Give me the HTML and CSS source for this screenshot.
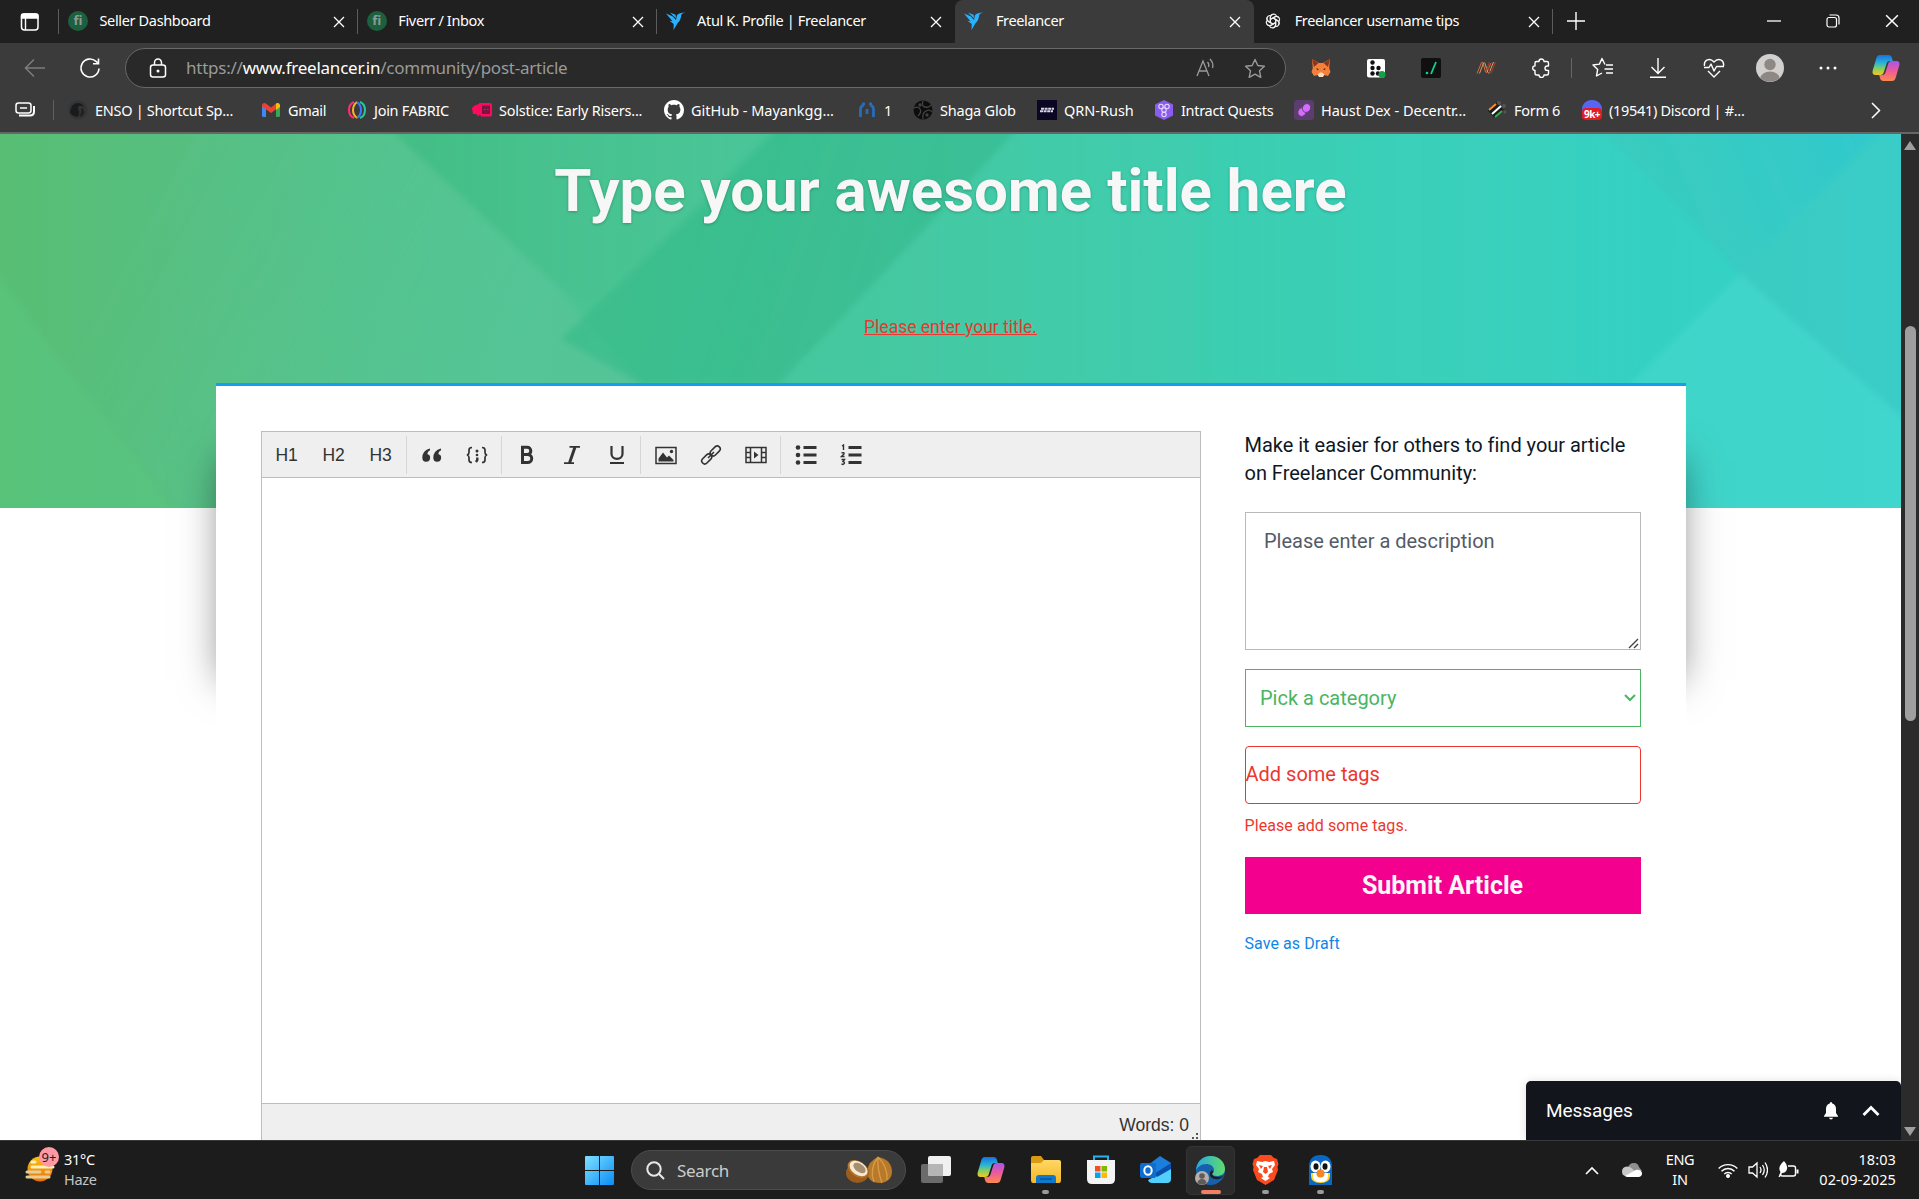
FILE: index.html
```html
<!DOCTYPE html>
<html lang="en">
<head>
<meta charset="utf-8">
<title>Freelancer</title>
<link rel="stylesheet" href="styles.css">
</head>
<body>
<svg class="defs" aria-hidden="true">
  <defs>
    <linearGradient id="cpA" x1="0" y1="0" x2="0" y2="1"><stop offset="0" stop-color="#1b6fe0"/><stop offset=".4" stop-color="#28b5d8"/><stop offset=".7" stop-color="#8ccf5a"/><stop offset="1" stop-color="#f7c520"/></linearGradient>
    <linearGradient id="cpB" x1="0" y1="0" x2="0" y2="1"><stop offset="0" stop-color="#a457e8"/><stop offset=".5" stop-color="#ee5a9a"/><stop offset="1" stop-color="#fb8a4c"/></linearGradient>
    <linearGradient id="win" x1="0" y1="0" x2="1" y2="1"><stop offset="0" stop-color="#7fe0ff"/><stop offset="1" stop-color="#0a8df5"/></linearGradient>
    <linearGradient id="edge1" x1="0" y1="0" x2="1" y2="0"><stop offset="0" stop-color="#2aa8e0"/><stop offset="1" stop-color="#5fdc6a"/></linearGradient>
    <linearGradient id="sun" x1="0" y1="0" x2="0" y2="1"><stop offset="0" stop-color="#f6c416"/><stop offset="1" stop-color="#ee6c08"/></linearGradient>
    <linearGradient id="fold" x1="0" y1="0" x2="0" y2="1"><stop offset="0" stop-color="#ffd766"/><stop offset="1" stop-color="#f5b824"/></linearGradient>
    <symbol id="close" viewBox="0 0 12 12"><path d="M1 1l10 10M11 1L1 11" stroke="currentColor" stroke-width="1.3" fill="none"/></symbol>
    <symbol id="bird" viewBox="0 0 20 20"><path fill="#29b2fe" d="M11 4.200q2-2.700 8.500-2.700-3.800.8-4.300 2.800-.2 4.500-3.700 8L7.500 19l.2-6-4.200-3.200 3 .4L0 2.500l6.500 2.700L10 9z"/><path fill="#29b2fe" d="M4 1.500l5.500 2.200.8 3.800L6.500 4z"/></symbol>
    <symbol id="copilot" viewBox="0 0 28 28"><path fill="url(#cpA)" d="M8 1h8.500c2 0 3 1.200 3.500 3l.8 3h-3.300c-1.600 0-2.500 1-3 2.700l-2.800 8.800c-.6 1.800-1.700 2.500-3.500 2.500H3.500C1 21 0 19 .7 16.500L4.400 4C5 2 6 1 8 1z"/><path fill="url(#cpB)" d="M20 27h-8.500c-2 0-3-1.200-3.500-3l-.8-3h3.300c1.600 0 2.500-1 3-2.700l2.800-8.800C16.900 7.700 18 7 19.800 7h4.700C27 7 28 9 27.300 11.500L23.600 24C23 26 22 27 20 27z"/></symbol>
  </defs>
</svg>

<header class="tabstrip">
  <div class="tab-actions"><svg width="20" height="20" viewBox="0 0 20 20"><rect x="1.500" y="2" width="16.500" height="16" rx="3" fill="none" stroke="#fff" stroke-width="1.500"/><path d="M1.500 3.500q0-1.500 2-1.500h12.500q2 0 2 1.500V6h-16.500zM5.500 6v12" fill="#fff" stroke="#fff" stroke-width="1.400"/></svg></div>
  <div class="tab"><span class="fiverr">fi</span><span class="tab-title">Seller Dashboard</span><svg class="x"><use href="#close"/></svg></div>
  <div class="tab"><span class="fiverr">fi</span><span class="tab-title">Fiverr / Inbox</span><svg class="x"><use href="#close"/></svg></div>
  <div class="tab"><svg class="fav"><use href="#bird"/></svg><span class="tab-title">Atul K. Profile | Freelancer</span><svg class="x"><use href="#close"/></svg></div>
  <div class="tab active"><svg class="fav"><use href="#bird"/></svg><span class="tab-title">Freelancer</span><svg class="x"><use href="#close"/></svg></div>
  <div class="tab plain"><svg class="fav knot" viewBox="0 0 24 24" fill="none" stroke="#f2f2f2" stroke-width="1.500"><g id="petal"><path d="M8.500 14V7.200a4.300 4.300 0 0 1 8-2.200M8.500 9.800l5.900-3.400a4.300 4.300 0 0 1 5.700 1.600"/></g><use href="#petal" transform="rotate(60 12 12)"/><use href="#petal" transform="rotate(120 12 12)"/><use href="#petal" transform="rotate(180 12 12)"/><use href="#petal" transform="rotate(240 12 12)"/><use href="#petal" transform="rotate(300 12 12)"/></svg><span class="tab-title">Freelancer username tips</span><svg class="x"><use href="#close"/></svg></div>
  <div class="newtab"><svg width="18" height="18"><path d="M9 0v18M0 9h18" stroke="#fff" stroke-width="1.400"/></svg></div>
  <div class="winctl">
    <svg width="14" height="14"><path d="M0 7h14" stroke="#fff" stroke-width="1.300"/></svg>
    <svg width="14" height="14" fill="none" stroke="#fff" stroke-width="1.200"><rect x="1" y="3.500" width="9.500" height="9.500" rx="2"/><path d="M3.500 1h6.500a3 3 0 0 1 3 3v6.500"/></svg>
    <svg width="14" height="14"><use href="#close"/></svg>
  </div>
</header>

<nav class="toolbar">
  <div class="navbtn dim"><svg width="22" height="20" viewBox="0 0 22 20" fill="none" stroke="#7d7d7d" stroke-width="1.500"><path d="M21 10H2M10 1.500L1.500 10l8.500 8.500"/></svg></div>
  <div class="navbtn"><svg width="22" height="22" viewBox="0 0 22 22" fill="none" stroke="#fff" stroke-width="1.600"><path d="M20 11.500a9 9 0 1 1-3-7.200l2 2M19.500 1.500v5.300h-5.500"/></svg></div>
  <div class="omnibox">
    <svg width="18" height="20" viewBox="0 0 18 20"><rect x="1.500" y="7" width="15" height="12" rx="2.500" fill="none" stroke="#fff" stroke-width="1.500"/><path d="M5.500 7V4.500a3.500 3.500 0 0 1 7 0V7" fill="none" stroke="#fff" stroke-width="1.500"/><circle cx="9" cy="13" r="1.500" fill="#fff"/></svg>
    <span class="url">https://<b>www.freelancer.in</b>/community/post-article</span>
    <svg width="20" height="20" viewBox="0 0 20 20" fill="none" stroke="#9a9a9a" stroke-width="1.300"><path d="M1 18L7 3l6 15M3 13h8M11.500 4q2 2 1 5M14 1q4 4.500 2.500 9"/></svg>
    <svg class="star" width="22" height="21" viewBox="0 0 22 21" fill="none" stroke="#9a9a9a" stroke-width="1.400" stroke-linejoin="round"><path d="M11 1.500l2.800 6 6.600.8-4.900 4.500 1.300 6.500L11 16.100l-5.800 3.200 1.300-6.500L1.600 8.300l6.600-.8z"/></svg>
  </div>
  <div class="ext">
    <svg width="20" height="20" viewBox="0 0 20 20"><path fill="#f5803a" d="M1 1l7 4h4l7-4-.8 9 1.300 4-2.500 4-4-1H7l-4 1-2.500-4 1.300-4z"/><path fill="#8f3414" d="M1 1l6.500 4L3 9zM19 1l-6.500 4L17 9z"/><path fill="#ffd9c0" d="M6.500 16.500L9 14.500h2l2.500 2-1.500 2.500H8z"/><path fill="#3a1c10" d="M5.500 10l2.500 1.500-2 .5zM14.500 10L12 11.500l2 .5z"/></svg>
    <svg width="20" height="20" viewBox="0 0 20 20"><rect x="1" y="1" width="18" height="18.500" rx="2" fill="#fff"/><g fill="#111"><circle cx="6.500" cy="4.500" r="2.200"/><circle cx="6.500" cy="10" r="2.200"/><circle cx="12.500" cy="10" r="2.200"/><circle cx="6.500" cy="15.500" r="2.200"/><circle cx="12" cy="15.500" r="2.200"/></g><circle cx="16" cy="16.500" r="3.500" fill="#13a24a"/></svg>
    <svg width="20" height="20" viewBox="0 0 20 20"><rect width="20" height="20" rx="2" fill="#101010"/><path d="M15 4l-5 12" stroke="#10d48e" stroke-width="1.800"/><circle cx="6" cy="15" r="1.300" fill="#10d48e"/></svg>
    <svg width="20" height="14" viewBox="0 0 20 14" fill="none" stroke-width="1"><path stroke="#d9693a" d="M1 12.500L5.500 1.500q1-.8 1.500.5l2.500 9q.6 1.300 1.500 0L15 2"/><path stroke="#d9a06a" d="M3.500 12.500L7.500 2q1-1 1.500.5l2.800 9q.7 1.200 1.500 0L17.500 1"/><path stroke="#b23c2a" d="M13.500 1l-3 8M19.500 1l-4.200 10.500q-.8 1-1.500 0L12.500 7"/></svg>
    <svg width="20" height="20" viewBox="0 0 20 20" fill="none" stroke="#fff" stroke-width="1.400" stroke-linejoin="round"><path d="M5.500 3.500H8a2.500 2.500 0 0 1 5 0h3a1.500 1.500 0 0 1 1.500 1.500v3h-1.300a2.200 2.200 0 0 0 0 4.400h1.300V15.500a1.500 1.500 0 0 1-1.500 1.500h-3a2.500 2.500 0 0 1-5 0H5.500A1.500 1.500 0 0 1 4 15.500v-3a2.300 2.300 0 0 1 0-4.600V5a1.500 1.500 0 0 1 1.500-1.500z"/></svg>
    <i class="vsep"></i>
    <svg width="21" height="21" viewBox="0 0 21 21" fill="none" stroke="#fff" stroke-width="1.400" stroke-linejoin="round"><path d="M13 7.500L10 1.500l-2.600 5.600L1 8l4.700 4.400L4.500 19l5.500-3"/><path d="M14 8h7M12.500 12H21M14 16h7"/></svg>
    <svg width="18" height="20" viewBox="0 0 18 20" fill="none" stroke="#fff" stroke-width="1.400"><path d="M9 0v15M2.500 9L9 15.500 15.500 9M1 19.300h16"/></svg>
    <svg width="22" height="20" viewBox="0 0 22 20" fill="none" stroke="#fff" stroke-width="1.400" stroke-linejoin="round"><path d="M1.500 8C.5 1.500 7-.5 11 4c4-4.500 10.500-2.500 9.500 4M1 9.500h5l2-3.500 3 7 2.500-4.500H21M5 13l6 6 6-6"/></svg>
    <svg width="28" height="28" viewBox="0 0 28 28"><circle cx="14" cy="14" r="14" fill="#d2d0ce"/><circle cx="14" cy="10.500" r="5.700" fill="#8d8884"/><path fill="#8d8884" d="M4.500 24a9.500 6.500 0 0 1 19 0 14 14 0 0 1-19 0z"/></svg>
    <svg width="18" height="4"><g fill="#fff"><circle cx="2" cy="2" r="1.500"/><circle cx="9" cy="2" r="1.500"/><circle cx="16" cy="2" r="1.500"/></g></svg>
    <svg width="28" height="28"><use href="#copilot"/></svg>
  </div>
</nav>

<div class="bookmarks">
  <div class="bm-first"><svg width="21" height="16" viewBox="0 0 21 16" fill="none" stroke="#fff" stroke-width="1.500"><rect x="1" y="1" width="15" height="10" rx="2.500"/><path d="M5 6h7"/><path d="M4 13.500h11q4 0 4-4V4" stroke-width="2"/></svg></div>
  <ul class="bm-list">
    <li><svg viewBox="0 0 20 20"><circle cx="10" cy="10" r="9.500" fill="#333436"/><path d="M2 12q1-8 7-9 6 0 7 5-2-3-5-2-2 2 0 5 1 4-2 6-6-1-7-5z" fill="#1a1b1d"/><path d="M13 8q4 1 3 6-2 3-5 3 3-4 2-9z" fill="#1f2022"/></svg><span>ENSO | Shortcut Sp...</span></li>
    <li><svg viewBox="0 0 20 20"><path fill="#4285f4" d="M1 5l4 3v9H2.500Q1 17 1 15.500z"/><path fill="#34a853" d="M19 5l-4 3v9h2.500q1.500 0 1.500-1.500z"/><path fill="#ea4335" d="M1 5q1-3 4-1.500l5 4 5-4Q18 2 19 5v1.500L10 13 1 6.500z"/><path fill="#fbbc04" d="M15 3.500Q18 2 19 5v2l-4 3z"/></svg><span>Gmail</span></li>
    <li><svg viewBox="0 0 20 20" fill="none" stroke-width="2"><path stroke="#ff2d78" d="M7 2Q2 4 2 10t5 8"/><path stroke="#ffb020" d="M10 2Q6 5 6 10t4 8"/><path stroke="#3a7bff" d="M10 2q4 3 4 8t-4 8"/><path stroke="#25c99a" d="M13 2q5 2 5 8t-5 8"/></svg><span>Join FABRIC</span></li>
    <li><svg viewBox="0 0 20 20"><path fill="#ff0a5c" d="M0 8q2-3 7-4V3h11q2 0 2 2v10q0 1.500-2 1.500H9l-1-2-2 2-1.500-2.500L1 14z"/><rect x="10" y="5.500" width="8" height="8.500" fill="#7b1440"/><path stroke="#ff0a5c" d="M12 9.500h1.500M15 9.500h1.500"/></svg><span class="wide">Solstice: Early Risers...</span></li>
    <li><svg viewBox="0 0 16 16"><path fill="#fff" d="M8 0C3.580 0 0 3.580 0 8c0 3.540 2.290 6.530 5.470 7.590.4.070.55-.17.55-.38 0-.19-.01-.82-.01-1.490-2.010.37-2.530-.49-2.690-.94-.09-.23-.48-.94-.82-1.130-.28-.15-.68-.52-.01-.53.63-.01 1.080.58 1.230.82.72 1.210 1.870.87 2.330.66.07-.52.28-.87.51-1.070-1.780-.2-3.640-.89-3.640-3.950 0-.87.31-1.590.82-2.150-.08-.2-.36-1.020.08-2.120 0 0 .67-.21 2.200.82.64-.18 1.320-.27 2-.27s1.360.09 2 .27c1.530-1.040 2.200-.82 2.200-.82.44 1.100.16 1.920.08 2.120.51.56.82 1.270.82 2.150 0 3.070-1.870 3.750-3.650 3.950.29.25.54.73.54 1.480 0 1.070-.01 1.930-.01 2.200 0 .21.15.46.55.38A8.010 8.010 0 0 0 16 8c0-4.420-3.580-8-8-8z"/></svg><span class="wider">GitHub - Mayankgg...</span></li>
    <li><svg viewBox="0 0 20 20" fill="none" stroke="#2a6cb8" stroke-width="2.800"><path d="M3.500 17V9q0-2.500 3-4M16.500 17V9q0-2.500-3-4M10 9v5M6.500 5.500v-3M13.500 5.500v-3"/></svg><span>1</span></li>
    <li><svg viewBox="0 0 20 20"><circle cx="10" cy="10" r="9.500" fill="#0d0d0d"/><g fill="none" stroke="#444" stroke-width="1.300"><path d="M10 1q-2 5 2 6t6-2M1 8q4-2 6 1t-2 7M10 19q-1-6 3-8t6 1"/><circle cx="7" cy="5" r="1"/><circle cx="14" cy="15" r="1"/></g></svg><span class="wide">Shaga Glob</span></li>
    <li><svg viewBox="0 0 20 20"><rect width="20" height="20" fill="#0b0722"/><path stroke="#d8d6e8" stroke-width="2" stroke-dasharray="3 .6" d="M4 8.800h13M3 11.300h13"/></svg><span class="wider">QRN-Rush</span></li>
    <li><svg viewBox="0 0 20 20"><path fill="#8b5cf0" d="M10 0l9 4.500v11L10 20l-9-4.500v-11z"/><g fill="none" stroke="#e6d9ff" stroke-width="1.100"><circle cx="7" cy="6.500" r="2.200"/><circle cx="13" cy="6.500" r="2.200"/><circle cx="10" cy="10" r="2.200"/><circle cx="10" cy="14.500" r="2.200"/></g></svg><span>Intract Quests</span></li>
    <li><svg viewBox="0 0 20 20"><rect width="20" height="20" rx="3" fill="#5b3d6e"/><g fill="#d66bff" stroke="#5b3d6e" stroke-width=".8"><ellipse cx="8" cy="12" rx="4" ry="4.500" transform="rotate(30 8 12)"/><ellipse cx="12.500" cy="8" rx="4" ry="4.500" transform="rotate(30 12.500 8)"/></g></svg><span class="wider">Haust Dex - Decentr...</span></li>
    <li><svg viewBox="0 0 20 20" fill="none"><path stroke="#1c1c1c" stroke-width="10" d="M4 14l9-8"/><circle cx="12" cy="3" r="2" fill="#555"/><circle cx="17" cy="6" r="2" fill="#555"/><circle cx="18" cy="12" r="1.500" fill="#555"/><path stroke-width="2" stroke="#ff8a2a" d="M2 10l7-6"/><path stroke-width="2" stroke="#fff" d="M5 14l9-8"/><path stroke-width="2" stroke="#2fae4e" d="M8 17l7-6"/></svg><span>Form 6</span></li>
    <li><i class="discord"><b>9k+</b></i><span>(19541) Discord | #...</span></li>
  </ul>
  <svg class="more" width="10" height="17" viewBox="0 0 10 17" fill="none" stroke="#fff" stroke-width="1.500"><path d="M1 1l7.500 7.500L1 16"/></svg>
</div>

<div class="viewport">
  <main class="page">
    <section class="hero">
      <svg class="facets" viewBox="0 0 1901 374" preserveAspectRatio="none" aria-hidden="true">
        <defs>
          <linearGradient id="hg" x1="0" x2="1"><stop offset="0" stop-color="#58be74"/><stop offset=".12" stop-color="#56c084"/><stop offset=".27" stop-color="#4dc391"/><stop offset=".45" stop-color="#42c59a"/><stop offset=".7" stop-color="#3acdb2"/><stop offset="1" stop-color="#3accc8"/></linearGradient>
          <linearGradient id="fd" gradientUnits="userSpaceOnUse" x1="560" y1="0" x2="920" y2="120"><stop offset="0" stop-color="#2fb983" stop-opacity=".5"/><stop offset="1" stop-color="#36b98f" stop-opacity=".55"/></linearGradient>
          <linearGradient id="fm" gradientUnits="userSpaceOnUse" x1="400" y1="0" x2="740" y2="0"><stop offset="0" stop-color="#35b97c" stop-opacity=".5"/><stop offset="1" stop-color="#50c79a" stop-opacity=".35"/></linearGradient>
          <linearGradient id="fr" gradientUnits="userSpaceOnUse" x1="900" y1="0" x2="1700" y2="0"><stop offset="0" stop-color="#4cceaa" stop-opacity=".35"/><stop offset="1" stop-color="#2fd5c8" stop-opacity=".55"/></linearGradient>
          <linearGradient id="fl" gradientUnits="userSpaceOnUse" x1="150" y1="60" x2="500" y2="250"><stop offset="0" stop-color="#5cc794" stop-opacity="0"/><stop offset="1" stop-color="#5cc79c" stop-opacity=".5"/></linearGradient>
          <linearGradient id="fc" gradientUnits="userSpaceOnUse" x1="1600" y1="100" x2="1850" y2="0"><stop offset="0" stop-color="#30cac0" stop-opacity="0"/><stop offset="1" stop-color="#2cc6d0" stop-opacity=".55"/></linearGradient>
          <filter id="soft" x="-5%" y="-5%" width="110%" height="110%"><feGaussianBlur stdDeviation="3"/></filter>
        </defs>
        <rect width="1901" height="374" fill="url(#hg)"/>
        <g filter="url(#soft)">
          <path fill="url(#fl)" d="M0 0H400L550 146 640 250V374H180L40 200z"/>
          <path fill="url(#fm)" d="M385 -9H780L690 90 590 170 550 146z"/>
          <path fill="url(#fd)" d="M780 -9H1022L780 250H640L560 205 640 130z"/>
          <path fill="#5ac680" fill-opacity=".55" d="M-9 130L40 200 180 383H-9z"/>
          <path fill="url(#fr)" d="M1022 -9H1600L1740 140 1640 250H780z"/>
          <path fill="url(#fc)" d="M1595 -9H1885L1740 140z"/>
          <path fill="#45dbd0" fill-opacity=".6" d="M1740 140L1910 290V383H1500z"/>
        </g>
      </svg>
      <h1>Type your awesome title here</h1>
      <a class="title-error">Please enter your title.</a>
    </section>
    <article class="card">
      <div class="editor">
        <div class="ed-tools">
          <div class="grp h"><span>H1</span><span>H2</span><span>H3</span></div>
          <div class="grp">
            <svg viewBox="0 0 22 22" fill="#333"><path d="M9 4.500v1.800Q6.500 7.500 6.300 10a3.900 3.900 0 1 1-5 3.900Q1.300 6.500 9 4.500zM20 4.500v1.800Q17.500 7.500 17.300 10a3.900 3.900 0 1 1-5 3.900Q12.300 6.500 20 4.500z"/></svg>
            <svg viewBox="0 0 22 22" fill="none" stroke="#333" stroke-width="1.700"><path d="M6 3.500q-3 0-3 2.500v2.500q0 2-2 2.500 2 .5 2 2.500V16q0 2.500 3 2.500M16 3.500q3 0 3 2.500v2.500q0 2 2 2.500-2 .5-2 2.500V16q0 2.500-3 2.500"/><circle cx="11" cy="7" r="1.500" fill="#333" stroke="none"/><circle cx="11" cy="11" r="1.300" fill="#333" stroke="none"/><path d="M11.300 13.500v2.500l-1.300 2" stroke-width="2.400"/></svg>
          </div>
          <div class="grp">
            <svg viewBox="0 0 22 22" fill="none" stroke="#333" stroke-width="3"><path d="M6.500 3.300h4.700a3.600 3.600 0 0 1 0 7.200H6.500zM6.500 10.500h5.200a4 4 0 0 1 0 8H6.500z"/></svg>
            <svg viewBox="0 0 22 22" stroke="#333"><path d="M8.500 2.800H19M3 19.200h10" stroke-width="1.800"/><path d="M14 3L8.500 19" stroke-width="3"/></svg>
            <svg viewBox="0 0 22 22" fill="none" stroke="#333" stroke-width="2.200"><path d="M5.500 2v8a5.500 4.800 0 0 0 11 0V2M4 19h14"/></svg>
          </div>
          <div class="grp">
            <svg viewBox="0 0 22 22"><rect x="1" y="3.500" width="20" height="16" fill="none" stroke="#333" stroke-width="1.500"/><path fill="#333" d="M3.500 17.500v-3l4.500-6 4 5 2-2 4.500 4.500v1.500z"/><circle cx="16.500" cy="7.500" r="1.700" fill="#333"/></svg>
            <svg viewBox="0 0 22 22" fill="none" stroke="#333" stroke-width="1.600"><rect x="9.500" y="4" width="11.500" height="6" rx="3" transform="rotate(-45 15.200 7)"/><rect x="1" y="12" width="11.500" height="6" rx="3" transform="rotate(-45 6.700 15)"/><path d="M8 14l6-6"/></svg>
            <svg viewBox="0 0 22 22" fill="none" stroke="#333" stroke-width="1.500"><path d="M1 3.500h20v15H1zM5.500 3.500v15M16.500 3.500v15M1 8.500h4.500M1 13.500h4.500M16.500 8.500H21M16.500 13.500H21"/><path d="M9 7.500l4.500 3.500L9 14.500z" fill="#333" stroke="none"/></svg>
          </div>
          <div class="grp">
            <svg viewBox="0 0 22 22" stroke="#333" fill="#333"><path d="M8.500 3.500h13M8.500 11h13M8.500 18.500h13" stroke-width="2.800"/><g stroke="none"><circle cx="3" cy="3.500" r="2.300"/><circle cx="3" cy="11" r="2.300"/><circle cx="3" cy="18.500" r="2.300"/></g></svg>
            <svg viewBox="0 0 22 22" stroke="#333" fill="none"><path d="M8.500 3.500h13M8.500 11h13M8.500 18.500h13" stroke-width="2.800"/><path stroke-width="1.400" d="M2 2l1.500-1v5M1.500 9q3-1 2.500 1l-2.500 2.500h3M1.500 15.500h3L3 17.500q3 1 0 3l-1.500-.5"/></svg>
          </div>
        </div>
        <div class="ed-body"></div>
        <div class="ed-status"><span>Words: 0</span><svg width="6" height="6" fill="#555"><path d="M4 0h2v2H4zM4 4h2v2H4zM0 4h2v2H0z"/></svg></div>
      </div>
      <aside class="side">
        <p class="lead">Make it easier for others to find your article on Freelancer Community:</p>
        <div class="desc"><span>Please enter a description</span><svg width="11" height="11" fill="none" stroke="#444" stroke-width="1.400"><path d="M1 10L10 1M6 10l4-4"/></svg></div>
        <div class="pick"><span>Pick a category</span><svg width="12" height="8" viewBox="0 0 12 8" fill="none" stroke="#4ab563" stroke-width="2"><path d="M1 1l5 5 5-5"/></svg></div>
        <div class="tags">Add some tags</div>
        <p class="tags-error">Please add some tags.</p>
        <button class="submit">Submit Article</button>
        <a class="draft">Save as Draft</a>
      </aside>
    </article>
    <div class="messages"><span>Messages</span>
      <svg width="16" height="18" viewBox="0 0 16 18" fill="#fff"><path d="M8 0q1.200 0 1.300 1.500Q13 2.500 13 7v4l2 3v.8H1V14l2-3V7q0-4.500 3.700-5.500Q6.800 0 8 0zM6 15.800h4q-.3 1.600-2 1.600t-2-1.600z"/></svg>
      <svg width="18" height="12" viewBox="0 0 18 12" fill="none" stroke="#fff" stroke-width="2.800"><path d="M1.500 10L9 2.500l7.500 7.500"/></svg>
    </div>
  </main>
  <div class="scroll"><i class="up"></i><i class="thumb"></i><i class="down"></i></div>
</div>

<footer class="taskbar">
  <div class="weather">
    <div class="haze"><svg width="36" height="36" viewBox="0 0 36 36"><circle cx="15" cy="21" r="12.500" fill="url(#sun)"/><g stroke="#fff0b8" stroke-width="3" stroke-linecap="round"><path d="M7 14h3M7 19h21"/></g><g stroke="#e3cf94" stroke-width="3" stroke-linecap="round"><path d="M2 24h13M21 24h3M2 29h22"/></g></svg><b>9+</b></div>
    <div class="wtext"><span>31°C</span><span class="muted">Haze</span></div>
  </div>
  <div class="apps">
    <div class="start"><svg width="29" height="29" viewBox="0 0 29 29" fill="url(#win)"><path d="M1 0h13v14H0V1q0-1 1-1zM15 0h13q1 0 1 1v13H15zM0 15h14v14H1q-1 0-1-1zM15 15h14v13q0 1-1 1H15z"/></svg></div>
    <div class="search">
      <svg width="19" height="19" viewBox="0 0 19 19" fill="none" stroke="#e8e8e8" stroke-width="2"><circle cx="8" cy="8" r="6.700"/><path d="M12.800 12.800L18 18"/></svg>
      <span>Search</span>
      <svg width="46" height="28" viewBox="0 0 46 28"><path d="M32 1q13 2 14 14 0 11-12 12-12 0-13-11Q22 5 32 1z" fill="#b8792a"/><path d="M32 1q-9 12-4 25M32 1q-1 12 4 26M32 1q10 10 9 23" stroke="#d79c46" stroke-width="1.300" fill="none"/><ellipse cx="11.500" cy="17" rx="11.500" ry="10" fill="#9c5d1c"/><ellipse cx="12" cy="13" rx="11.500" ry="7.500" transform="rotate(35 12 13)" fill="#b4742a"/><ellipse cx="12.500" cy="12.500" rx="10" ry="6.500" transform="rotate(35 12.500 12.500)" fill="#f7ead2"/><ellipse cx="13.500" cy="12" rx="7" ry="4" transform="rotate(35 13.500 12)" fill="#a58f70"/></svg>
    </div>
    <div class="app"><svg width="30" height="30" viewBox="0 0 30 30"><rect x="0" y="9" width="22" height="19" rx="2" fill="#6b6b6b"/><rect x="7" y="1" width="23" height="20" rx="2" fill="#f0f0f0"/><path d="M7 9h15v12H9q-2 0-2-2z" fill="#b5b5b5"/></svg></div>
    <div class="app"><svg width="28" height="28"><use href="#copilot"/></svg></div>
    <div class="app run"><svg width="30" height="28" viewBox="0 0 30 28"><path fill="#d99a14" d="M0 2q0-2 2-2h8l3 4h15v6H0z"/><path fill="url(#fold)" d="M0 7h10l3-3h15q2 0 2 2v18q0 3-2 3H2q-2 0-2-3z"/><path fill="#1179cc" d="M5 27v-5q0-3 3-3h14q3 0 3 3v5z"/><path stroke="#0b5597" stroke-width="1.500" d="M9 23h12"/></svg></div>
    <div class="app"><svg width="30" height="30" viewBox="0 0 30 30"><path d="M8 6V1.500h14V6" fill="none" stroke="#29b0ea" stroke-width="2"/><path fill="#f4f4f4" d="M1 5h28v19q0 5-5 5H6q-5 0-5-5z"/><path fill="#f25022" d="M9 11h5.500v5.500H9z"/><path fill="#7fba00" d="M15.500 11H21v5.500h-5.500z"/><path fill="#00a4ef" d="M9 17.500h5.500V23H9z"/><path fill="#ffb900" d="M15.500 17.500H21V23h-5.500z"/></svg></div>
    <div class="app"><svg width="31" height="28" viewBox="0 0 31 28"><path fill="#1c7edb" d="M8 9L20 0l11 7v6L16 22 8 17z"/><path fill="#50d0fb" d="M31 10v13q0 4-4 4H12q-3 0-4-3l12-6z"/><path fill="#0b4fae" d="M14 18L31 7v6L17 21z"/><rect y="7" width="16" height="15" rx="2" fill="#0f6cd0"/><ellipse cx="8" cy="14.500" rx="3.700" ry="4.300" fill="none" stroke="#fff" stroke-width="2"/></svg></div>
    <div class="app current"><svg width="31" height="31" viewBox="0 0 31 31"><circle cx="15.500" cy="15.500" r="14.500" fill="#1761ac"/><path fill="url(#edge1)" d="M1 15C2 6 8 1 15.500 1 24 1 30 7 30 14c0 5-4 7-8 7-3 0-5-1-5-2 1-1 2-2 2-4 0-4-4-6-8-6-5 0-8 3-10 6z"/><path fill="#1f1f22" d="M17 19q1 3 6 3 4 0 6-2-2 3-5 4-6 1-9-3-1-4 2-6 2 2 0 4z"/><circle cx="7" cy="23" r="7" fill="#b5b0ac"/><circle cx="7" cy="21" r="2.800" fill="#5f5b58"/><path fill="#5f5b58" d="M2.500 28a4.500 4 0 0 1 9 0 7 7 0 0 1-9 0z"/></svg></div>
    <div class="app run"><svg width="27" height="30" viewBox="0 0 27 30"><path fill="#fb4a1e" d="M8 0h11l3 3 3 1 1.500 5-1 3 .500 3-4 10-8.500 5L5 25 1 15l.500-3-1-3L2 4l3-1z"/><path fill="#fff" d="M5 6l5 1 3.500-1L17 7l5-1 1 4-3 4 1 3-4 2-1 3 2 1-4.500 3L9 23l2-1-1-3-4-2 1-3-3-4z"/><path fill="#fb4a1e" d="M7 10l4 1-2 3zM20 10l-4 1 2 3zM12 12h3l1 5-2.500 2L11 17z"/></svg></div>
    <div class="app run"><svg width="23" height="30" viewBox="0 0 23 30"><path fill="#0a68c4" d="M0 12Q0 0 11.500 0T23 12v18H0z"/><path fill="#ffd51e" d="M2 18h19v3q0 7-9.500 7T2 21z"/><path fill="#fff" d="M4 18h15v3q0 6-7.500 6T4 21z"/><ellipse cx="6.500" cy="11.500" rx="5" ry="6" fill="#fff"/><ellipse cx="16.500" cy="11.500" rx="5" ry="6" fill="#fff"/><ellipse cx="7" cy="11.500" rx="2.500" ry="3.300" fill="#111"/><ellipse cx="16" cy="11.500" rx="2.500" ry="3.300" fill="#111"/><ellipse cx="11.500" cy="18.500" rx="4" ry="4" fill="#f5861f"/></svg></div>
  </div>
  <div class="tray">
    <svg width="14" height="9" viewBox="0 0 14 9" fill="none" stroke="#fff" stroke-width="1.600"><path d="M1 8l6-6 6 6"/></svg>
    <svg class="cloud" width="20" height="14" viewBox="0 0 20 14"><path fill="#8f8f8f" d="M6 5q1-5 6-5 4 0 5 4l3 4-8 2z"/><path fill="#c8c8c8" d="M0 8.500Q0 4 5 3.500q3 0 5 2l3 3-8 5Q0 13 0 8.500z"/><path fill="#fff" d="M3 13l9-5q2-2 5-1 3 1 3 3.500T17 14H5z"/></svg>
    <div class="lang"><span>ENG</span><span>IN</span></div>
    <svg class="wifi" width="20" height="15" viewBox="0 0 20 15" fill="none" stroke="#fff" stroke-width="1.400"><path d="M.700 5.500a13 13 0 0 1 18.600 0M3.500 8.300a9 9 0 0 1 13 0M6.300 11a5.200 5.200 0 0 1 7.400 0"/><circle cx="10" cy="13" r="1.300" fill="#fff"/></svg>
    <svg class="sound" width="20" height="18" viewBox="0 0 20 18" fill="none" stroke="#fff" stroke-width="1.300"><path d="M1 6h3.500L9 2v14l-4.500-4H1zM12 6q2 3 0 6M14.500 4q3.500 5 0 10M17 1.500q5 7.500 0 15"/></svg>
    <svg width="21" height="18" viewBox="0 0 21 18"><path d="M10 5h5.500q2 0 2 2v6q0 2-2 2h-11q-2 0-2-2" fill="none" stroke="#fff" stroke-width="1.400"/><path d="M18.500 8.500h2v4h-2z" fill="#fff"/><path fill="#fff" d="M6 0q4 4 3 8-1 4-5 4l-2 4H.500l2-5Q-1 6 6 0z"/></svg>
    <div class="clock"><span>18:03</span><span>02-09-2025</span></div>
  </div>
</footer>
</body>
</html>
```
FILE: styles.css
```css
* { box-sizing: border-box; }
html, body { margin: 0; height: 100%; }
body {
  display: flex; flex-direction: column; height: 1199px; overflow: hidden;
  font-family: "Noto Sans", "Open Sans", sans-serif; font-size: 15px; color: #fff; background: #202020;
}
svg { display: block; flex: none; }
.defs { position: absolute; width: 0; height: 0; }

/* tab strip */
.tabstrip { display: flex; height: 43px; flex: none; background: #202020; padding-bottom: 1px; }
.tab-actions { width: 59px; display: flex; align-items: center; padding-left: 20px; border-right: 1px solid #5c5c5c; margin: 9px 0 8px; }
.tab { width: 298.800px; display: flex; align-items: center; padding: 0 13px 0 9px; position: relative; }
.tab::after { content: ""; position: absolute; right: 0; top: 9px; height: 25px; width: 1px; background: #5c5c5c; }
.tab.active { background: #3b3b3b; border-radius: 8px 8px 0 0; margin-bottom: -1px; padding-bottom: 1px; }
.tab.active::after, .tab:has(+ .active)::after { display: none; }
.tab .fav { width: 20px; height: 20px; }
.tab .knot { width: 18px; height: 18px; margin: 0 1px; }
.tab .x { width: 12px; height: 12px; margin-top: 2px; }
.tab-title { flex: 1; margin: -2px 0 0 11.500px; font-size: 14.500px; letter-spacing: -.35px; white-space: nowrap; }
.fiverr { width: 20px; height: 20px; border-radius: 50%; background: #1c6040; color: #8b9b92; font: bold 13px/18px "Open Sans", sans-serif; text-align: center; }
.newtab { width: 46px; display: flex; align-items: center; justify-content: center; }
.winctl { margin-left: auto; display: flex; align-items: center; gap: 45px; padding-right: 20px; }

/* address bar */
.toolbar { display: flex; height: 49px; flex: none; align-items: center; background: #3b3b3b; }
.navbtn { width: 55px; display: flex; justify-content: center; }
.navbtn:first-child { width: 62px; padding-left: 7px; }
.omnibox { width: 1161px; height: 40px; margin: 1px 0 0 8px; border: 1.500px solid #686868; border-radius: 20px; background: #292929; display: flex; align-items: center; padding: 0 19px 0 23px; }
.url { flex: 1; margin: -2px 0 0 19px; font-size: 17px; letter-spacing: -.24px; color: #9a9a9a; white-space: nowrap; }
.url b { font-weight: 400; color: #fff; }
.omnibox .star { margin-left: 28px; }
.ext { display: grid; grid-template-columns: repeat(5, 55px) 7px 55px 56px 56px 56px 59px 57px; align-items: center; justify-items: center; margin-left: 7px; }
.vsep { width: 1px; height: 20px; background: #666; }

/* bookmarks */
.bookmarks { display: flex; height: 42px; flex: none; align-items: center; background: #3b3b3b; border-bottom: 2px solid #666; padding-bottom: 4px; }
.bm-first { width: 54px; height: 20px; padding: 2px 0 0 15px; border-right: 1px solid #606060; }
.bm-list { display: grid; grid-template-columns: 193px 86px 125px 192px 193px 56px 124px 117px 140px 193px 95px 150px; margin: 0; padding: 0 0 0 14px; list-style: none; }
.bm-list li { display: flex; align-items: center; gap: 7px; height: 20px; font-size: 14.500px; line-height: 20px; letter-spacing: -.3px; white-space: nowrap; }
.bm-list .wide { letter-spacing: -.22px; }
.bm-list .wider { letter-spacing: -.02px; }
.bm-list svg { width: 20px; height: 20px; }
.more { margin: 0 0 0 139px; }
.discord { width: 20px; height: 20px; background: #5865f2; border-radius: 9px; display: flex; align-items: flex-end; font-style: normal; }
.discord b { width: 20px; height: 12px; background: #e01b24; border-radius: 4px; font: bold 10px/12px "Open Sans", sans-serif; letter-spacing: -.5px; text-align: center; }

/* page */
.viewport { flex: 1; display: flex; min-height: 0; background: #fff; }
.page { flex: 1; position: relative; z-index: 0; overflow: hidden; font-family: Roboto, sans-serif; }
.hero { height: 374px; position: relative; z-index: -2; display: flex; flex-direction: column; align-items: center; }
.facets { position: absolute; inset: 0; width: 100%; height: 100%; }
.hero h1 { position: relative; margin: 21px 0 0; font-size: 60px; line-height: 72px; font-weight: 700; color: #f7f7f7; text-shadow: 0 1px 3px rgba(0,0,0,.25); white-space: nowrap; }
.title-error { position: relative; margin-top: 88px; font-size: 17.500px; line-height: 24px; color: #eb3730; text-decoration: underline; }
.card { position: relative; width: 1470px; height: 900px; margin: -125px 0 0 216px; background: #fff; border-top: 3px solid #149fee; display: flex; gap: 44px; padding: 45px; }
.card::before { content: ""; position: absolute; z-index: -1; left: 10px; right: 10px; top: 78px; height: 212px; box-shadow: 0 0 38px 4px rgba(0,0,0,.5); }

.editor { width: 940px; height: 760px; border: 1px solid #bdbdbd; display: flex; flex-direction: column; color: #333; font-family: "Liberation Sans", Arial, sans-serif; }
.ed-tools { height: 46px; flex: none; background: #efefef; border-bottom: 1px solid #bdbdbd; display: flex; align-items: center; }
.grp { display: flex; align-items: center; height: 38px; padding: 0 2px; border-right: 1px solid #d6d6d6; }
.grp:last-child { border: 0; }
.grp svg { width: 22px; height: 22px; margin: 0 10.900px 0 12px; }
.grp.h { padding: 0 2px 0 1px; }
.grp.h span { width: 47px; text-align: center; font-size: 17.500px; letter-spacing: -.2px; padding-top: 1px; }
.ed-body { height: 625px; flex: none; }
.ed-status { flex: 1; position: relative; background: #efefef; border-top: 1px solid #bdbdbd; text-align: right; padding: 11px 11px; font-size: 17.500px; line-height: 20px; }
.ed-status svg { position: absolute; right: 2px; top: 29px; }

.side { width: 396px; margin-left: -.500px; color: #0e1724; display: flex; flex-direction: column; }
.lead { margin: 0; font-size: 20px; line-height: 28px; letter-spacing: -.02px; }
.desc { height: 138px; margin-top: 25px; border: 1px solid #b9b9b9; padding: 14px 18.500px; font-size: 20px; line-height: 28px; color: #555b66; position: relative; }
.desc svg { position: absolute; right: 1px; bottom: 0; }
.pick { height: 58px; margin-top: 19px; border: 1px solid #4ab563; color: #4ab563; font-size: 20px; display: flex; align-items: center; justify-content: space-between; padding: 0 4px 0 14.500px; }
.tags { height: 58px; margin-top: 19px; border: 1px solid #eb3730; border-radius: 4px; color: #eb3730; font-size: 20px; line-height: 55px; }
.tags-error { margin: 11px 0 0; color: #eb3730; font-size: 16px; line-height: 22px; letter-spacing: .08px; }
.submit { height: 57px; margin-top: 20px; padding: 0; border: 0; background: #f4008f; color: #f7f7f7; font: 700 25px/57px Roboto, sans-serif; }
.draft { margin-top: 19px; font-size: 16px; line-height: 22px; letter-spacing: .08px; color: #0f86e6; }

.messages { position: absolute; right: 0; bottom: 0; width: 375px; height: 59px; background: #12151c; border-radius: 5px 5px 0 0; box-shadow: 0 0 10px rgba(0,0,0,.12); display: flex; align-items: center; padding: 0 21px 0 20px; font-size: 19px; }
.messages span { flex: 1; letter-spacing: -.05px; }
.messages svg + svg { margin-left: 23px; }

.scroll { width: 18px; flex: none; background: #2b2b2b; display: flex; flex-direction: column; align-items: center; padding: 7px 0 4px; }
.up, .down { border: 6px solid transparent; width: 0; height: 0; }
.up { border-bottom: 9px solid #9f9f9f; border-top: 0; }
.down { border-top: 9px solid #9f9f9f; border-bottom: 0; margin-top: auto; }
.thumb { width: 11px; height: 395px; margin-top: 176px; border-radius: 6px; background: #9f9f9f; }

/* taskbar */
.taskbar { height: 59px; flex: none; background: #1c1c1c; border-top: 1px solid #383838; display: flex; align-items: center; letter-spacing: -.3px; }
.weather { width: 571px; display: flex; align-items: center; padding-left: 25px; }
.haze { position: relative; width: 36px; height: 36px; margin-top: -8px; }
.haze b { position: absolute; left: 14px; top: -1px; width: 20px; height: 20px; border-radius: 50%; background: #ff99a4; color: #222; font: 13px/20px "Noto Sans", sans-serif; text-align: center; letter-spacing: 0; }
.wtext, .lang, .clock { display: flex; flex-direction: column; line-height: 20px; font-size: 14.500px; margin-top: -2px; }
.wtext { margin-left: 3px; }
.muted { color: #c5c5c5; }
.apps { display: flex; align-items: center; }
.start { width: 60px; padding-left: 14px; }
.search { width: 275px; height: 40px; border: 1px solid #4c4c4c; border-radius: 20px; background: #3a3a3a; display: flex; align-items: center; padding: 0 13px 0 14px; color: #ccc; font-size: 17px; }
.search span { flex: 1; margin-left: 12px; }
.search + .app { margin-left: 5px; }
.app { width: 49px; height: 49px; margin-right: 6px; border-radius: 5px; display: flex; align-items: center; justify-content: center; position: relative; }
.app.current { background: #2b2b2b; border: 1px solid #343434; }
.app.run::after, .app.current::after { content: ""; position: absolute; bottom: 1px; width: 7px; height: 4px; border-radius: 2px; background: #9a9a9a; }
.app.current::after { width: 20px; bottom: 0; background: #f27f63; }
.tray { flex: 1; display: flex; align-items: center; justify-content: flex-end; padding-right: 23px; }
.cloud { margin-left: 23px; }
.lang { width: 32px; margin-left: 22px; align-items: center; }
.wifi { margin: 0 10px 0 22px; }
.sound { margin-right: 10px; }
.clock { width: 80px; margin-left: 17px; align-items: flex-end; white-space: nowrap; letter-spacing: .1px; }
```
